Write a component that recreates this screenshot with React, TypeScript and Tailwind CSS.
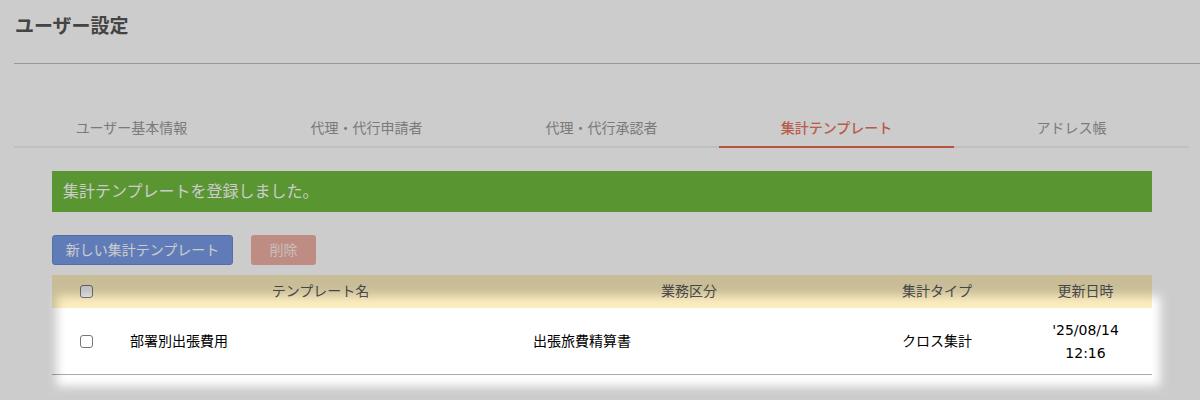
const tabs = ['ユーザー基本情報', '代理・代行申請者', '代理・代行承認者', '集計テンプレート', 'アドレス帳']

function Check({ dim }: { dim?: boolean }) {
  return (
    <span
      className={`block w-[13px] h-[13px] rounded-[3px] border border-[#767676] ${
        dim ? 'bg-[#efefef]' : 'bg-white'
      }`}
    />
  )
}

export default function App() {
  return (
    <div
      className="relative w-[1200px] h-[400px] overflow-hidden bg-white text-[#333]"
      style={{ fontFamily: '"DejaVu Sans", "Noto Sans CJK JP", sans-serif' }}
    >
      {/* Page title */}
      <h1 className="pl-[15px] pt-[14px] text-[19px] leading-[24px] font-bold text-[#555]">ユーザー設定</h1>
      <div className="mt-[25px] ml-[14px] border-t border-[#bfbfbf]" />

      {/* Tabs */}
      <div className="mt-[46px] ml-[14px] w-[1175px] flex">
        {tabs.map((t, i) => (
          <div
            key={t}
            className={`w-[235px] shrink-0 h-[38px] flex items-center justify-center text-[14px] border-b-2 ${
              i === 3 ? 'border-[#e66a4b] text-[#e8735c] font-medium' : 'border-[#f0f0f0] text-[#999]'
            }`}
          >
            {t}
          </div>
        ))}
      </div>

      <div className="ml-[52px] w-[1100px]">
        {/* Success message */}
        <div className="mt-[23px] h-[41px] flex items-center pl-[11px] bg-[#70bb3e] text-white text-[16px]">
          集計テンプレートを登録しました。
        </div>

        {/* Actions */}
        <div className="mt-[23px] flex gap-[18px]">
          <button className="h-[30px] w-[181px] rounded-[3px] border border-[#6a8ad0] bg-[#789ce7] text-white text-[14px]">
            新しい集計テンプレート
          </button>
          <button className="h-[30px] w-[65px] rounded-[3px] bg-[#eeafa3] text-[#fbeeec] text-[14px]">削除</button>
        </div>

        {/* Table */}
        <div className="mt-[10px] text-[14px]">
          <div className="h-[33px] flex items-center bg-[#fcedbf] text-[#555]">
            <div className="w-[66px] flex justify-center pl-[2px]">
              <Check dim />
            </div>
            <div className="w-[405px] text-center">テンプレート名</div>
            <div className="w-[332px] text-center">業務区分</div>
            <div className="w-[164px] text-center">集計タイプ</div>
            <div className="w-[133px] text-center">更新日時</div>
          </div>
          <div className="h-[67px] flex items-center border-b border-[#aaa] text-black">
            <div className="w-[66px] flex justify-center pl-[2px] pt-[1px]">
              <Check />
            </div>
            <div className="w-[405px] pl-[12px]">部署別出張費用</div>
            <div className="w-[332px] pl-[10px]">出張旅費精算書</div>
            <div className="w-[164px] text-center">クロス集計</div>
            <div className="w-[133px] text-center leading-[23px] pt-[1px]">
              '25/08/14
              <br />
              12:16
            </div>
          </div>
        </div>
      </div>

      {/* Spotlight overlay */}
      <div className="pointer-events-none absolute left-[47px] top-[286px] w-[1123px] h-[110px] shadow-[0_0_0_9999px_rgba(0,0,0,0.2),inset_0_0_10px_10px_rgba(0,0,0,0.2)]" />
    </div>
  )
}
